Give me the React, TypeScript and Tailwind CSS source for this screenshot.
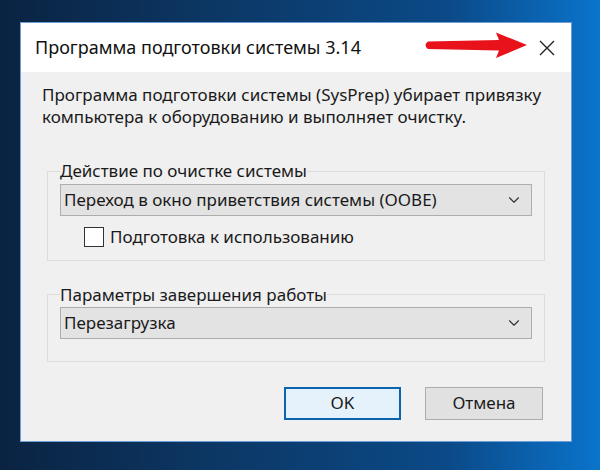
import { ChevronDown } from "lucide-react";

const FONT = { fontFamily: '"Noto Sans", "Open Sans", sans-serif' };

function Combo({ value }: { value: string }) {
  return (
    <div className="flex h-[32px] items-center justify-between border border-[#adadad] bg-[#e3e3e3] pl-[3px] pr-[8px] text-[17px] text-[#1a1a1a]">
      <span>{value}</span>
      <ChevronDown size={18} strokeWidth={1.5} className="text-[#333]" />
    </div>
  );
}

function Group({ label, children, className }: { label: string; children: React.ReactNode; className?: string }) {
  return (
    <fieldset className={`border border-[#dcdcdc] px-[12px] ${className ?? ""}`}>
      <legend className="px-0 text-[17px] leading-[20px] text-[#1a1a1a]">{label}</legend>
      {children}
    </fieldset>
  );
}

export default function App() {
  return (
    <div
      className="relative h-[470px] w-[600px] overflow-hidden bg-[linear-gradient(90deg,#0a2342_0%,#0c3764_35%,#0b4a88_75%,#0a74cc_100%)] pl-[20px] pt-[22px]"
      style={FONT}
    >
      {/* window */}
      <div className="flex h-[420px] w-[552px] flex-col border border-[#6d9fd6] bg-[#f0f0f0]">
        {/* title bar */}
        <div className="flex h-[49px] items-center justify-between bg-white pl-[14px] pr-[16px]">
          <span className="text-[18px] text-[#111]">Программа подготовки системы 3.14</span>
          <svg width="16" height="16" viewBox="0 0 16 16" className="text-[#222]">
            <path d="M1 1L15 15M15 1L1 15" stroke="currentColor" strokeWidth="1.4" />
          </svg>
        </div>

        {/* body */}
        <div className="flex flex-1 flex-col px-[26px] pt-[12px]">
          <p className="-ml-[5px] text-[17px] leading-[22px] text-[#1a1a1a]">
            Программа подготовки системы (SysPrep) убирает привязку
            <br />
            компьютера к оборудованию и выполняет очистку.
          </p>

          <Group label="Действие по очистке системы" className="mt-[33px] pb-[10px]">
            <div className="mt-[3px]">
              <Combo value="Переход в окно приветствия системы (OOBE)" />
            </div>
            <div className="mt-[8px] flex items-center gap-[6px] pl-[24px]">
              <span className="h-[20px] w-[20px] border border-[#333] bg-white" />
              <span className="text-[17px] text-[#1a1a1a]">Подготовка к использованию</span>
            </div>
          </Group>

          <Group label="Параметры завершения работы" className="mt-[24px] pb-[22px]">
            <div className="mt-[2px]">
              <Combo value="Перезагрузка" />
            </div>
          </Group>

          <div className="mt-[25px] flex justify-end gap-[24px] pr-[2px]">
            <button className="h-[33px] w-[117px] border-2 border-[#0a64ad] bg-[#e5f1fb] text-[17px] text-[#1a1a1a]">
              OK
            </button>
            <button className="h-[33px] w-[118px] border border-[#adadad] bg-[#e1e1e1] text-[17px] text-[#1a1a1a]">
              Отмена
            </button>
          </div>
        </div>
      </div>

      {/* red arrow annotation */}
      <svg className="absolute left-[423px] top-[32px]" width="106" height="28" viewBox="0 0 106 28">
        <path
          d="M5 9.5 L76 8 L73 0.5 L104 13 L73 26 L76 18.5 L5 17 Q0 13.2 5 9.5 Z"
          fill="#e8121a"
        />
      </svg>
    </div>
  );
}
